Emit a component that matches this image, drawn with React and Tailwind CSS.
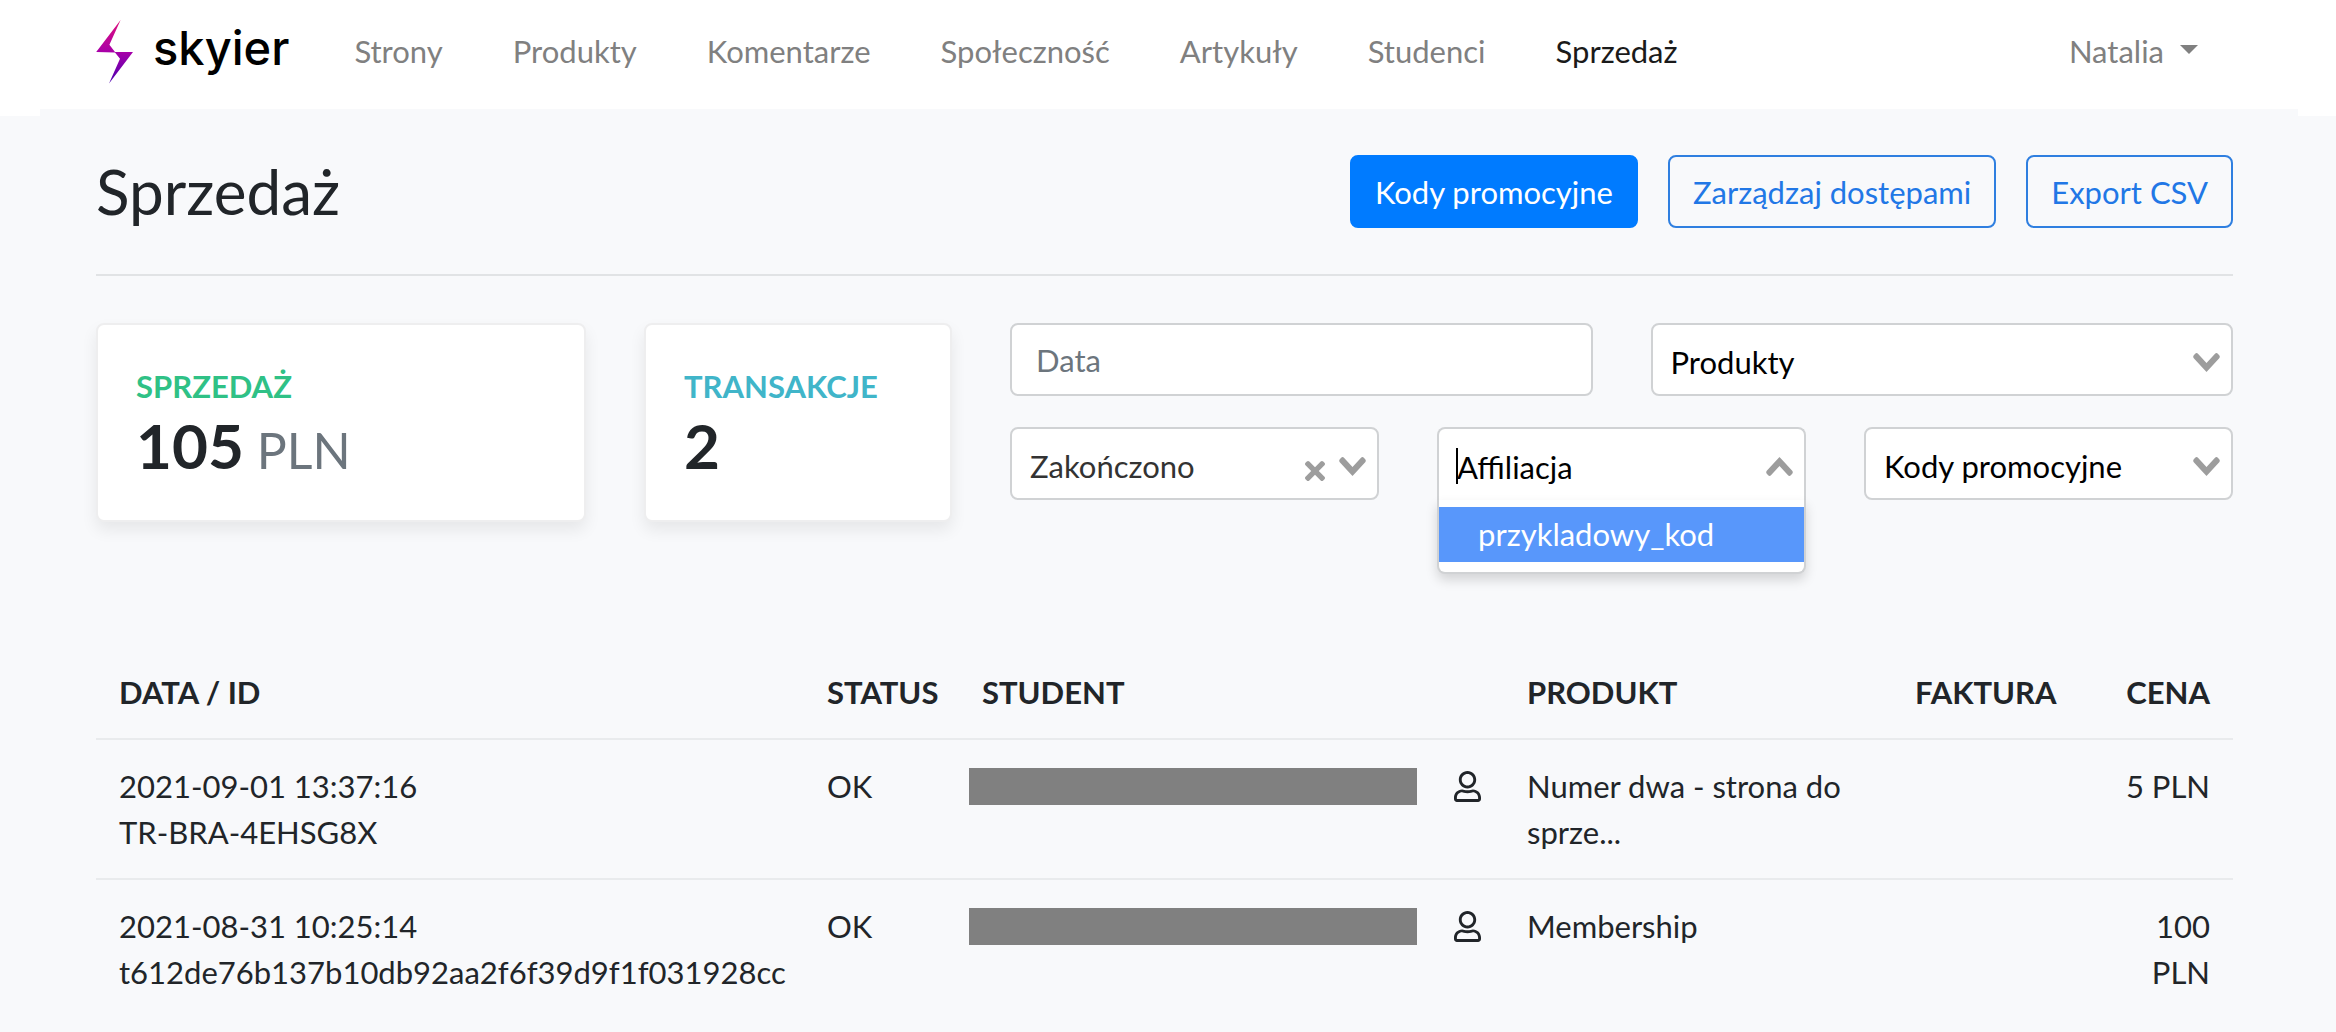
import { FaRegUser } from "react-icons/fa";

const NAV = ["Strony", "Produkty", "Komentarze", "Społeczność", "Artykuły", "Studenci", "Sprzedaż"];

const ROWS = [
  {
    date: "2021-09-01 13:37:16",
    id: "TR-BRA-4EHSG8X",
    status: "OK",
    product: "Numer dwa - strona do sprze...",
    price: "5 PLN",
  },
  {
    date: "2021-08-31 10:25:14",
    id: "t612de76b137b10db92aa2f6f39d9f1f031928cc",
    status: "OK",
    product: "Membership",
    price: "100 PLN",
  },
];

function Bolt() {
  return (
    <svg viewBox="0 0 37 64" className="h-16 w-[37px]" aria-hidden="true">
      <defs>
        <linearGradient id="bolt" x1="0" y1="0" x2="0" y2="1">
          <stop offset="0" stopColor="#e0107c" />
          <stop offset="0.5" stopColor="#a800a8" />
          <stop offset="1" stopColor="#4a00b0" />
        </linearGradient>
      </defs>
      <path
        d="M24.6 0 L13.4 24.8 L19 32 L37 32 L13 63.5 L24 38.8 L19 32.4 L0.2 32 Z"
        fill="url(#bolt)"
      />
    </svg>
  );
}

function Chevron({ className = "" }) {
  return (
    <svg viewBox="0 0 14 10" className={`h-[19px] w-[27px] fill-[#9d9d9d] ${className}`} aria-hidden="true">
      <path d="M9.211364 7.59931l4.48338-4.867229c.407008-.441854.407008-1.158247 0-1.60046l-.73712-.80023c-.407008-.441854-1.066904-.441854-1.474243 0L7 5.198617 2.51662.33139c-.407008-.441853-1.066904-.441853-1.474243 0l-.737121.80023c-.407008.441854-.407008 1.158248 0 1.600461l4.48338 4.867228L7 10l2.211364-2.40069z" />
    </svg>
  );
}

function Cross() {
  return (
    <svg viewBox="0 0 10 10" className="size-5 fill-[#9d9d9d]" aria-hidden="true">
      <path d="M6.895455 5l2.842897-2.842898c.348864-.348863.348864-.914488 0-1.263636L9.106534.261648c-.348864-.348864-.914489-.348864-1.263636 0L5 3.104545 2.157102.261648c-.348863-.348864-.914488-.348864-1.263636 0L.261648.893466c-.348864.348864-.348864.914489 0 1.263636L3.104545 5 .261648 7.842898c-.348864.348863-.348864.914488 0 1.263636l.631818.631818c.348864.348864.914773.348864 1.263636 0L5 6.895455l2.842898 2.842897c.348863.348864.914772.348864 1.263636 0l.631818-.631818c.348864-.348864.348864-.914489 0-1.263636L6.895455 5z" />
    </svg>
  );
}

function Select({ label, clearable = false }) {
  return (
    <div className="relative">
      <select
        aria-label={label}
        className={`h-[73px] w-full appearance-none rounded-lg border-2 border-[#d0d2d4] bg-white pt-[5px] pl-[18px] outline-none ${
          clearable ? "text-[#333]" : "text-black"
        }`}
      >
        <option>{label}</option>
      </select>
      {clearable && (
        <button type="button" aria-label="Wyczyść" className="absolute top-[34px] right-[54px]">
          <Cross />
        </button>
      )}
      <Chevron className="pointer-events-none absolute top-[30px] right-[13px]" />
    </div>
  );
}

function AffiliateSelect() {
  return (
    <div className="relative">
      <input
        type="text"
        role="combobox"
        aria-label="Affiliacja"
        aria-expanded="true"
        aria-controls="affiliate-options"
        placeholder="Affiliacja"
        className="h-[73px] w-full rounded-t-lg border-2 border-b-0 border-[#d0d2d4] bg-white pt-1 pl-[18px] outline-none placeholder:text-black placeholder:opacity-100"
      />
      <span className="absolute top-[21px] left-[19px] h-9 w-0.5 bg-black" />
      <Chevron className="pointer-events-none absolute top-[30px] right-[13px] rotate-180" />
      <ul
        id="affiliate-options"
        role="listbox"
        aria-label="Affiliacja"
        className="absolute top-[73px] right-0 left-0 rounded-b-lg border-2 border-t-0 border-[#d0d2d4] bg-white pt-[7px] pb-2.5 shadow-[0_6px_12px_rgba(0,0,0,0.15)]"
      >
        <li role="option" aria-selected="true" className="bg-[#5897fb] px-[39px] pt-1 pb-[5px] leading-[46px] text-white">
          przykladowy_kod
        </li>
      </ul>
    </div>
  );
}

function Card({ title, titleClass, value, unit }) {
  return (
    <section className="rounded-lg border-2 border-[#eeeeef] bg-white px-[38px] pt-[38px] pb-[39px] shadow-[0_8px_16px_rgba(0,0,0,0.075)]">
      <h2 className={`font-bold uppercase ${titleClass}`}>{title}</h2>
      <p className="text-[62px] leading-[72px] font-bold">
        {value}
        {unit && <span className="text-[50px] leading-[60px] font-normal text-[#6c757d]"> {unit}</span>}
      </p>
    </section>
  );
}

const outlineButton =
  "h-[73px] rounded-lg border-2 border-[#2f7fe0] px-[23px] text-[#2177e6]";

export default function App() {
  return (
    <div className="min-h-screen bg-[#f8f9fb] font-['Lato',sans-serif] text-[31px] leading-[46px] text-[#212529]">
      <header className="bg-white">
        <div className="flex h-[109px] items-start pr-[103px] pl-24">
          <a href="#" className="flex items-start gap-5 pt-5">
            <Bolt />
            <span className="font-['Inter',sans-serif] text-[47px] leading-[56px] font-medium text-black">skyier</span>
          </a>
          <nav className="ml-[65px] flex gap-[70px] pt-7">
            {NAV.map((item) => (
              <a
                key={item}
                href="#"
                className={item === "Sprzedaż" ? "text-[#1a1a1a]" : "text-[#808080]"}
              >
                {item}
              </a>
            ))}
          </nav>
          <button type="button" className="mt-7 mr-[35px] ml-auto flex items-center gap-4 text-[#808080]">
            Natalia
            <svg viewBox="0 0 18 9" className="mb-1 h-[9px] w-[18px] fill-[#808080]" aria-hidden="true">
              <path d="M0 0H18L9 9Z" />
            </svg>
          </button>
        </div>
        <div className="mr-[38px] ml-10 h-[7px] bg-[#f8f9fb]" />
      </header>

      <main className="pt-[39px] pr-[103px] pb-6 pl-24">
        <div className="flex items-center justify-between border-b-2 border-[#e1e3e5] pb-[46px]">
          <h1 className="text-[62px] leading-[73px]">Sprzedaż</h1>
          <div className="flex gap-[30px]">
            <button type="button" className="h-[73px] rounded-lg border-2 border-[#007bff] bg-[#007bff] px-[23px] text-white">
              Kody promocyjne
            </button>
            <button type="button" className={outlineButton}>Zarządzaj dostępami</button>
            <button type="button" className={outlineButton}>Export CSV</button>
          </div>
        </div>

        <div className="mt-[47px] grid grid-cols-[490fr_308fr_1223fr] gap-[58px]">
          <Card title="Sprzedaż" titleClass="text-[#2fc186]" value="105" unit="PLN" />
          <Card title="Transakcje" titleClass="text-[#40b5c9]" value="2" />
          <form className="flex flex-col gap-[31px]">
            <div className="grid grid-cols-2 gap-[58px]">
              <input
                type="text"
                aria-label="Data"
                placeholder="Data"
                className="h-[73px] w-full rounded-lg border-2 border-[#d0d2d4] bg-white px-6 outline-none placeholder:text-[#6c757d] placeholder:opacity-100"
              />
              <Select label="Produkty" />
            </div>
            <div className="grid grid-cols-3 gap-[58px]">
              <Select label="Zakończono" clearable />
              <AffiliateSelect />
              <Select label="Kody promocyjne" />
            </div>
          </form>
        </div>

        <table className="mt-[124px] w-full table-fixed border-collapse text-left">
          <colgroup>
            <col className="w-[708px]" />
            <col className="w-[155px]" />
            <col />
            <col className="w-[388px]" />
            <col className="w-[212px]" />
            <col className="w-[129px]" />
          </colgroup>
          <thead>
            <tr className="uppercase">
              <th className="px-[23px] py-[23px]">Data / ID</th>
              <th className="px-[23px] py-[23px]">Status</th>
              <th className="px-[23px] py-[23px]">Student</th>
              <th className="px-[23px] py-[23px]">Produkt</th>
              <th className="px-[23px] py-[23px]">Faktura</th>
              <th className="py-[23px] pr-[23px] pl-4 text-right">Cena</th>
            </tr>
          </thead>
          <tbody>
            {ROWS.map((row) => (
              <tr key={row.id} className="border-t-2 border-[#e9ebed] align-top">
                <td className="px-[23px] py-[23px]">
                  {row.date}
                  <br />
                  {row.id}
                </td>
                <td className="px-[23px] py-[23px]">{row.status}</td>
                <td className="py-[23px] pr-[23px] pl-2.5">
                  <div className="flex h-[46px] items-center justify-between">
                    <div className="h-[37px] w-[448px] bg-[#808080]" />
                    <FaRegUser className="h-[31px] w-[27px]" aria-label="Profil studenta" />
                  </div>
                </td>
                <td className="px-[23px] py-[23px]">{row.product}</td>
                <td className="px-[23px] py-[23px]" />
                <td className="py-[23px] pr-[23px] pl-4 text-right">{row.price}</td>
              </tr>
            ))}
          </tbody>
        </table>
      </main>
    </div>
  );
}
